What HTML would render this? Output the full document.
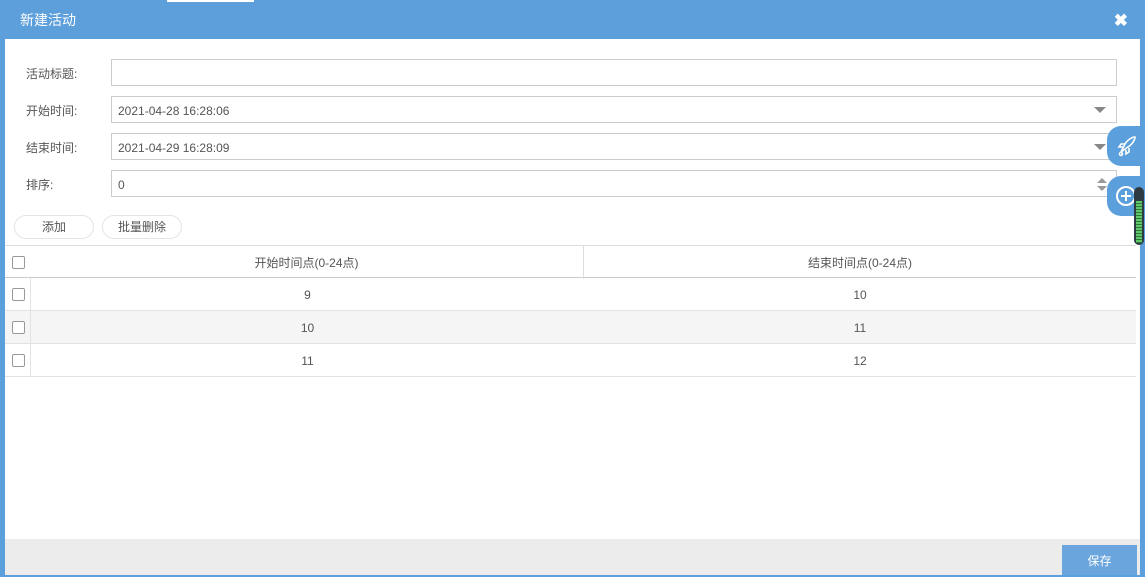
<!DOCTYPE html>
<html><head><meta charset="utf-8"><style>
*{box-sizing:border-box;margin:0;padding:0}
body{width:1145px;height:575px;overflow:hidden;background:#5b9fdc;font-family:"Liberation Sans","Noto Sans CJK SC",sans-serif;position:relative}
.hdr{position:absolute;left:0;top:0;width:1145px;height:39px;background:#5d9fdb;color:#fff;font-size:14px;line-height:40px;padding-left:20px}
.tab{position:absolute;left:167px;top:0;width:87px;height:2px;background:#fff}
.x{position:absolute;right:17px;top:0;color:#fff;font-size:17px;font-weight:bold;line-height:41px}
.body{position:absolute;left:5px;top:39px;width:1135px;height:500px;background:#fff}
.foot{position:absolute;left:5px;top:539px;width:1135px;height:36px;background:#ececec}
.save{position:absolute;left:1062px;top:545px;width:75px;height:30px;background:#6aa6dd;color:#fff;font-size:12px;text-align:center;line-height:32px}
.lbl{position:absolute;left:26px;font-size:12px;color:#555}
.inp{position:absolute;left:111px;width:1006px;height:27px;border:1px solid #ccc;font-size:12px;color:#555;line-height:29px;padding-left:6px}
.arr{position:absolute;right:10px;top:10px;width:0;height:0;border-left:6px solid transparent;border-right:6px solid transparent;border-top:6px solid #888}
.btn{position:absolute;top:215px;height:24px;border:1px solid #e4e4e4;border-radius:12px;font-size:12px;color:#555;text-align:center;line-height:23px}
.tbl{position:absolute;left:5px;top:245px;width:1131px}
.row{position:relative;height:33px;border-bottom:1px solid #e3e3e3;font-size:12px;color:#555}
.row.g{background:#f5f5f5}
.cb{position:absolute;left:7px;top:10px;width:13px;height:13px;border:1px solid #999;border-radius:2px;background:#fff}
.c1{position:absolute;left:25px;width:554px;top:0;height:33px;line-height:35px;text-align:center}
.c2{position:absolute;left:579px;right:0;top:0;height:33px;line-height:35px;text-align:center}
.side{position:absolute;left:1107px;width:38px;height:40px;background:#5b9fdc;border-radius:14px 0 0 14px}
</style></head><body>
<div class="hdr">新建活动</div><div class="tab"></div><div class="x">✖</div>
<div class="body"></div>
<div class="lbl" style="top:65px">活动标题:</div><div class="inp" style="top:59px"></div>
<div class="lbl" style="top:102px">开始时间:</div><div class="inp" style="top:96px">2021-04-28 16:28:06<div class="arr"></div></div>
<div class="lbl" style="top:139px">结束时间:</div><div class="inp" style="top:133px">2021-04-29 16:28:09<div class="arr"></div></div>
<div class="lbl" style="top:176px">排序:</div><div class="inp" style="top:170px">0<div style="position:absolute;right:9px;top:7px;border-left:5px solid transparent;border-right:5px solid transparent;border-bottom:5px solid #999"></div><div style="position:absolute;right:9px;top:15px;border-left:5px solid transparent;border-right:5px solid transparent;border-top:5px solid #999"></div></div>
<div class="btn" style="left:14px;width:80px">添加</div>
<div class="btn" style="left:102px;width:80px">批量删除</div>
<div class="tbl">
<div class="row" style="border-top:1px solid #ddd;border-bottom:1px solid #ccc"><div class="cb"></div><div class="c1" style="border-right:1px solid #ddd">开始时间点(0-24点)</div><div class="c2">结束时间点(0-24点)</div></div>
<div class="row"><div class="cb"></div><div class="c1" style="border-left:1px solid #e3e3e3">9</div><div class="c2">10</div></div>
<div class="row g"><div class="cb"></div><div class="c1" style="border-left:1px solid #e3e3e3">10</div><div class="c2">11</div></div>
<div class="row"><div class="cb"></div><div class="c1" style="border-left:1px solid #e3e3e3">11</div><div class="c2">12</div></div>
</div>
<div class="foot"></div><div class="save">保存</div>
<div class="side" style="top:126px"><svg width="38" height="40"><g fill="none" stroke="#fff" stroke-width="1.6"><path d="M14 26l4-8c3-5 8-7 10-7c0 2-2 7-7 10z"/><path d="M18 18h-4l-2 3h4M22 22v4l-3 2v-4"/><circle cx="14" cy="28" r="1.5"/></g></svg></div>
<div class="side" style="top:176px"><svg width="38" height="40"><circle cx="19" cy="20" r="9" fill="none" stroke="#fff" stroke-width="2"/><path d="M19 15v10M14 20h10" stroke="#fff" stroke-width="2"/></svg></div>
<div style="position:absolute;left:1134px;top:187px;width:10px;height:58px;background:#2d3a44;border-radius:5px"><div style="position:absolute;left:2px;top:14px;width:6px;height:42px;background:repeating-linear-gradient(#5fc86a 0 2px,#2f7a3a 2px 3px)"></div></div>
</body></html>
